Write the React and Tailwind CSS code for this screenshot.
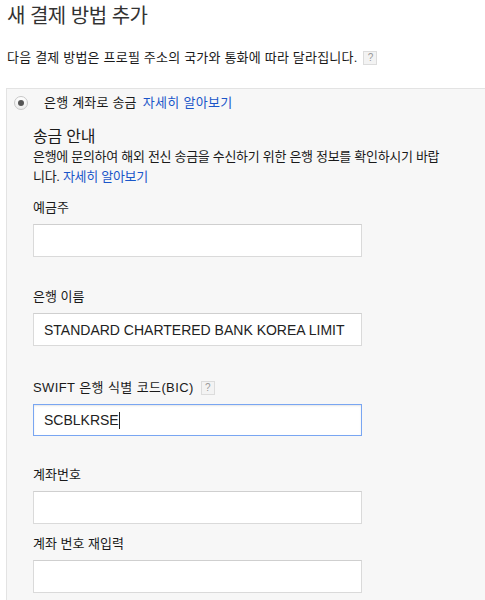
import React from 'react';

const FONT = "font-['Liberation_Sans','Noto_Sans_CJK_KR',sans-serif]";

function HelpBox() {
  return (
    <span className="inline-flex w-[14px] h-[14px] items-center justify-center border border-[#dcdcdc] bg-[#f3f3f3] text-[10px] leading-none text-[#999] align-middle tracking-normal">
      ?
    </span>
  );
}

function Field({ label, help, value, className = '' }) {
  return (
    <div className={className}>
      <div className="h-[20px] leading-[20px] text-[13px] text-[#1a1a1a] flex items-center gap-[7px]">
        <span>{label}</span>
        {help && <HelpBox />}
      </div>
      <input
        readOnly
        value={value || ''}
        className="mt-[6px] block w-[329px] h-[33px] border border-[#dadada] border-t-[#cfcfcf] bg-white px-[10px] text-[14px] text-[#222] outline-none"
      />
    </div>
  );
}

export default function App() {
  return (
    <div className={`min-h-screen bg-white text-[#1a1a1a] ${FONT}`}>
      {/* 제목 */}
      <div className="pl-[7px] pt-[3px]">
        <h1 className="h-[26px] leading-[26px] text-[20px] tracking-[-0.5px] text-[#333]">새 결제 방법 추가</h1>
        <p className="mt-[19px] h-[20px] leading-[20px] text-[13px] tracking-[0.2px] flex items-center gap-[6px]">
          <span>다음 결제 방법은 프로필 주소의 국가와 통화에 따라 달라집니다.</span>
          <HelpBox />
        </p>
      </div>

      {/* 결제 수단 패널 */}
      <div className="mt-[20px] ml-[6px] border-t border-l border-[#e3e3e3] bg-[#f7f7f7] pb-[20px]">
        <div className="pt-[4px] pl-[7px] h-[24px] flex items-center">
          <div className="w-[14px] h-[14px] rounded-full border border-[#c8c8c8] bg-gradient-to-b from-white to-[#ececec] flex items-center justify-center">
            <div className="w-[6px] h-[6px] rounded-full bg-[#555]" />
          </div>
          <span className="ml-[16px] text-[13px] leading-[20px] tracking-[0.2px]">은행 계좌로 송금</span>
          <a className="ml-[6px] text-[13px] leading-[20px] tracking-[0.3px] text-[#1a56c9]">자세히 알아보기</a>
        </div>

        <div className="pl-[26px]">
          <h2 className="mt-[14px] h-[20px] leading-[20px] text-[16px] tracking-[-0.2px]">송금 안내</h2>
          <p className="text-[13px] leading-[20px] tracking-[-0.3px] whitespace-nowrap">
            은행에 문의하여 해외 전신 송금을 수신하기 위한 은행 정보를 확인하시기 바랍
            <br />
            니다. <a className="text-[#1a56c9]">자세히 알아보기</a>
          </p>

          <Field label="예금주" className="mt-[11px]" />
          <Field label="은행 이름" value="STANDARD CHARTERED BANK KOREA LIMIT" className="mt-[30px]" />

          <div className="mt-[32px]">
            <div className="h-[20px] leading-[20px] text-[13px] text-[#1a1a1a] flex items-center gap-[7px]">
              <span className="tracking-[0.4px]">SWIFT 은행 식별 코드(BIC)</span>
              <HelpBox />
            </div>
            <div className="mt-[6px] w-[329px] h-[32px] border border-[#79a6f2] bg-white px-[10px] flex items-center text-[14px] text-[#222] shadow-[inset_0_1px_2px_rgba(0,0,0,0.1)]">
              <span>SCBLKRSE</span>
              <span className="w-px h-[17px] bg-[#222]" />
            </div>
          </div>

          <Field label="계좌번호" className="mt-[29px]" />
          <Field label="계좌 번호 재입력" className="mt-[10px]" />
        </div>
      </div>
    </div>
  );
}
